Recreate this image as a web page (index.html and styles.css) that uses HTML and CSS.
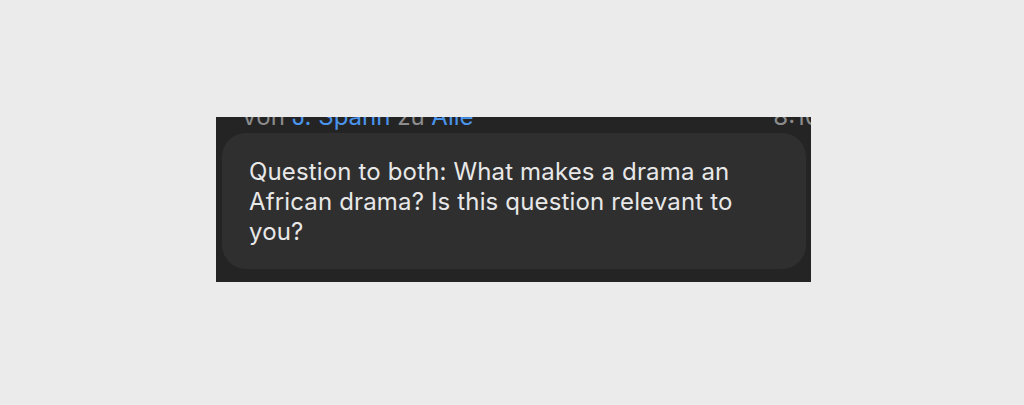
FILE: index.html
```html
<!DOCTYPE html>
<html lang="en">
<head>
<meta charset="utf-8">
<link rel="stylesheet" href="styles.css">
</head>
<body>
<div class="panel">
  <div class="meta">
    <span class="from">Von <span class="name">J. Spahn</span> zu <span class="name">Alle</span></span>
    <span class="time">8:10</span>
  </div>
  <div class="bubble">
    <p class="text">Question to both: What makes a drama an African drama? Is this question relevant to you?</p>
  </div>
</div>
</body>
</html>
```

FILE: styles.css
```css
html, body {
  margin: 0;
  background: #ebebeb;
}
body {
  padding: 117px 0 0 216px;
  font-family: Inter, "Noto Sans", sans-serif;
}
.panel {
  width: 595px;
  height: 165px;
  background: #242424;
  overflow: hidden;
  display: flex;
  flex-direction: column;
}
.meta {
  display: flex;
  justify-content: space-between;
  margin: -12px 0 0 25px;
  height: 24px;
  line-height: 24px;
  font-size: 24px;
  color: #8c8c8c;
  white-space: nowrap;
}
.name {
  color: #4a94ec;
}
.time {
  margin-right: -9px;
}
.bubble {
  margin: 4px 5px 0 6px;
  height: 136px;
  box-sizing: border-box;
  background: #2f2f2f;
  border-radius: 24px;
  padding: 24px 27px 0 27px;
}
.text {
  margin: 0;
  max-width: 505px;
  font-size: 24px;
  line-height: 30px;
  letter-spacing: 0.15px;
  color: #e8e8e8;
}
```
